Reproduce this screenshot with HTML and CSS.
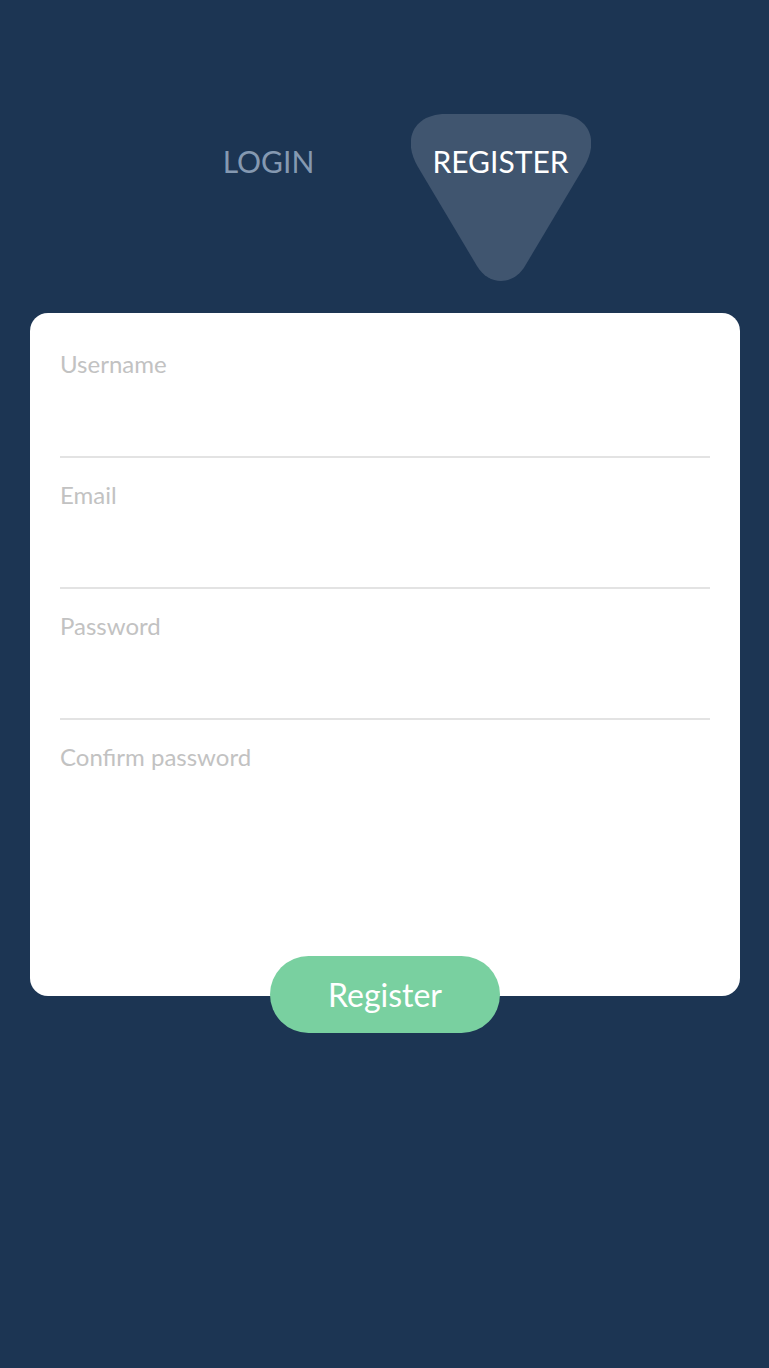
FILE: index.html
```html
<!DOCTYPE html>
<html>
<head>
<meta charset="utf-8">
<link rel="stylesheet" href="styles.css">
</head>
<body>
<div class="page">
  <nav class="tabs">
    <div class="tab">LOGIN</div>
    <div class="tab tab-active">
      <svg class="tab-shape" width="180" height="168" viewBox="0 0 180 168"><path d="M35 0 L145 0 C178 0 189 26 173 53 L114 152 C102 172 78 172 66 152 L7 53 C-9 26 2 0 35 0 Z" fill="#40556f"/></svg>
      <span class="tab-label">REGISTER</span>
    </div>
  </nav>
  <form class="card">
    <div class="field"><label class="label">Username</label><div class="input"></div></div>
    <div class="field"><label class="label">Email</label><div class="input"></div></div>
    <div class="field"><label class="label">Password</label><div class="input"></div></div>
    <div class="field field-last"><label class="label">Confirm password</label><div class="input"></div></div>
    <button type="button" class="btn">Register</button>
  </form>
</div>
</body>
</html>
```
FILE: styles.css
```css
html, body {
  margin: 0;
  padding: 0;
  background: #1c3553;
  height: 100%;
}
body {
  font-family: Lato, "Open Sans", sans-serif;
}
.page {
  padding-top: 114px;
}
.tabs {
  display: flex;
  justify-content: center;
  gap: 52px;
}
.tab {
  position: relative;
  width: 180px;
  height: 167px;
  text-align: center;
  font-size: 30px;
  line-height: 36px;
  padding-top: 29px;
  box-sizing: border-box;
  color: #8599b1;
}
.tab-active {
  color: #ffffff;
}
.tab-shape {
  position: absolute;
  left: 0;
  top: 0;
}
.tab-label {
  position: relative;
}
.card {
  margin: 32px 29px 0 30px;
  background: #fff;
  border-radius: 18px;
  padding: 14px 30px 0;
  display: flex;
  flex-direction: column;
}
.field {
  padding-top: 23px;
  border-bottom: 2px solid #e3e3e3;
}
.field-last {
  border-bottom: none;
}
.label {
  display: block;
  font-size: 24px;
  line-height: 28px;
  color: #c2c2c2;
}
.input {
  height: 78px;
}
.btn {
  align-self: center;
  width: 230px;
  height: 77px;
  margin: 107px 0 -37px;
  border: none;
  border-radius: 39px;
  background: #79d0a0;
  color: #fff;
  font-family: Lato, "Open Sans", sans-serif;
  font-size: 32px;
  padding: 0;
}
```
